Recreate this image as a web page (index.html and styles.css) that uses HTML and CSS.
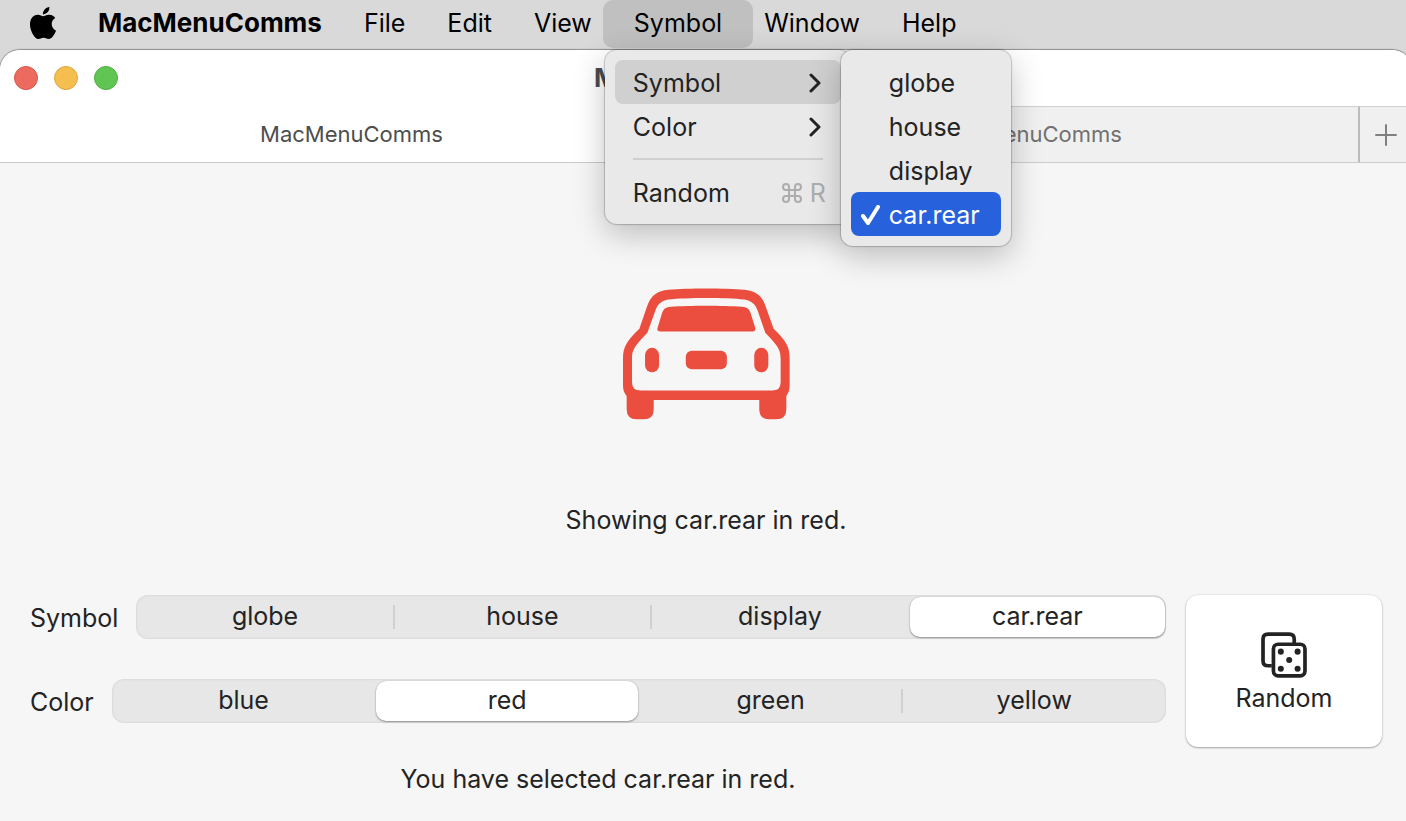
FILE: index.html
```html
<!DOCTYPE html>
<html lang="en">
<head>
<meta charset="utf-8">
<title>MacMenuComms</title>
<link rel="stylesheet" href="styles.css">
</head>
<body>
<nav class="menubar" aria-label="Menu bar">
  <button class="menubar-item apple" aria-label="Apple menu">
    <svg viewBox="0 0 24 24" aria-hidden="true"><path d="M12.152 6.896c-.948 0-2.415-1.078-3.96-1.04-2.04.027-3.91 1.183-4.961 3.014-2.117 3.675-.546 9.103 1.519 12.09 1.013 1.454 2.208 3.09 3.792 3.039 1.52-.065 2.09-.987 3.935-.987 1.831 0 2.35.987 3.96.948 1.637-.026 2.676-1.48 3.676-2.948 1.156-1.688 1.636-3.325 1.662-3.415-.039-.013-3.182-1.221-3.22-4.857-.026-3.04 2.48-4.494 2.597-4.559-1.429-2.09-3.623-2.324-4.39-2.376-2-.156-3.675 1.09-4.61 1.09zM15.53 3.83c.843-1.012 1.4-2.427 1.245-3.83-1.207.052-2.662.805-3.532 1.818-.78.896-1.454 2.338-1.273 3.714 1.338.104 2.715-.688 3.559-1.701"/></svg>
  </button>
  <button class="menubar-item app-name">MacMenuComms</button>
  <button class="menubar-item">File</button>
  <button class="menubar-item">Edit</button>
  <button class="menubar-item">View</button>
  <div class="menubar-open">
    <button class="menubar-item active" aria-expanded="true">Symbol</button>
    <div class="menu main-menu" role="menu">
      <button class="menu-item current" role="menuitem">Symbol
        <svg class="chevron" viewBox="0 0 12 20" aria-hidden="true"><path d="M2 2l8 8-8 8"/></svg>
      </button>
      <button class="menu-item" role="menuitem">Color
        <svg class="chevron" viewBox="0 0 12 20" aria-hidden="true"><path d="M2 2l8 8-8 8"/></svg>
      </button>
      <hr class="menu-separator">
      <button class="menu-item" role="menuitem">Random
        <span class="shortcut"><svg class="command" viewBox="0 0 20 20" aria-label="Command"><path d="M7 7h6v6H7zM7 7H4a3 3 0 1 1 3-3zM13 7V4a3 3 0 1 1 3 3zM13 13h3a3 3 0 1 1-3 3zM7 13v3a3 3 0 1 1-3-3z"/></svg>R</span>
      </button>
      <div class="menu sub-menu" role="menu">
        <button class="menu-item" role="menuitemradio">globe</button>
        <button class="menu-item" role="menuitemradio">house</button>
        <button class="menu-item" role="menuitemradio">display</button>
        <button class="menu-item checked" role="menuitemradio" aria-checked="true">
          <svg class="check" viewBox="0 0 20 20" aria-hidden="true"><path d="M2 11l5 7L17 2"/></svg>car.rear</button>
      </div>
    </div>
  </div>
  <button class="menubar-item">Window</button>
  <button class="menubar-item">Help</button>
</nav>

<div class="window">
  <header class="titlebar">
    <div class="lights">
      <button class="light close" aria-label="Close"></button>
      <button class="light minimize" aria-label="Minimize"></button>
      <button class="light zoom" aria-label="Zoom"></button>
    </div>
    <h1 class="title">MacMenuComms</h1>
  </header>
  <div class="tabs" role="tablist">
    <button class="tab selected" role="tab" aria-selected="true">MacMenuComms</button>
    <button class="tab" role="tab">MacMenuComms</button>
    <button class="new-tab" aria-label="New tab">
      <svg viewBox="0 0 22 22" aria-hidden="true"><path d="M11 1v20M1 11h20"/></svg>
    </button>
  </div>

  <main class="content">
    <svg class="car" viewBox="39 24 500 393" role="img" aria-label="car.rear">
      <path fill-rule="evenodd" d="M39 235C39 199 50 182 88 145L112 75C123 45 142 31 175 28C230 23 347 23 402 28C435 31 455 45 465 75L490 145C528 182 538 199 538 235V315C538 330 534 338 528 346V386Q528 416 498 416H477Q447 416 447 386V358H131V386Q131 416 101 416H80Q50 416 50 386V346C43 338 39 330 39 315ZM66 235C66 210 72 198 112 157L136 90C143 70 155 60 175 57C230 51 347 51 402 57C422 60 435 70 442 90L465 157C505 198 511 210 511 235V305Q511 330 486 330H92Q66 330 66 305Z"/>
      <path d="M142 144L156 98C161 84 168 80 182 79C240 75 337 75 395 79C409 80 416 84 421 98L435 143Q437 153 427 153H152Q140 153 142 144Z"/>
      <rect x="105" y="202" width="42" height="73" rx="21"/>
      <rect x="432" y="202" width="42" height="73" rx="21"/>
      <rect x="227" y="211" width="123" height="55" rx="18"/>
    </svg>
    <p class="status">Showing car.rear in red.</p>

    <div class="controls">
      <div class="pickers">
        <div class="picker" role="radiogroup" aria-labelledby="symbol-label">
          <span class="picker-label" id="symbol-label">Symbol</span>
          <div class="segments">
            <label class="segment"><input type="radio" name="symbol"><span>globe</span></label>
            <label class="segment"><input type="radio" name="symbol"><span>house</span></label>
            <label class="segment"><input type="radio" name="symbol"><span>display</span></label>
            <label class="segment"><input type="radio" name="symbol" checked><span>car.rear</span></label>
          </div>
        </div>
        <div class="picker" role="radiogroup" aria-labelledby="color-label">
          <span class="picker-label" id="color-label">Color</span>
          <div class="segments">
            <label class="segment"><input type="radio" name="color"><span>blue</span></label>
            <label class="segment"><input type="radio" name="color" checked><span>red</span></label>
            <label class="segment"><input type="radio" name="color"><span>green</span></label>
            <label class="segment"><input type="radio" name="color"><span>yellow</span></label>
          </div>
        </div>
        <p class="status">You have selected car.rear in red.</p>
      </div>
      <button class="random">
        <svg viewBox="273 158 137 136" aria-hidden="true">
          <path d="M305 258H294Q279 258 279 243V179Q279 164 294 164H357Q372 164 372 179V190"/>
          <rect x="310" y="194" width="94" height="94" rx="14"/>
          <g class="pips"><circle cx="332" cy="216" r="9"/><circle cx="382" cy="216" r="9"/><circle cx="357" cy="241" r="9"/><circle cx="332" cy="267" r="9"/><circle cx="382" cy="267" r="9"/></g>
        </svg>
        Random
      </button>
    </div>
  </main>
</div>
</body>
</html>
```
FILE: styles.css
```css
* {
  box-sizing: border-box;
}

html {
  height: 100%;
  overflow: hidden;
}

body {
  display: flex;
  flex-direction: column;
  min-height: 100%;
  margin: 0;
  background: #d9d9d9;
  color: #232323;
  font-family: Inter, "Liberation Sans", sans-serif;
  font-size: 25px;
  line-height: 32px;
}

button {
  padding: 0;
  border: 0;
  background: none;
  color: inherit;
  font: inherit;
}

/* Menu bar */
.menubar {
  position: relative;
  z-index: 2;
  display: flex;
  padding-left: 6px;
  color: #000;
}

.menubar-item {
  height: 48px;
  padding: 0 21px 2px;
}

.menubar-item.apple {
  padding-right: 18px;
}

.apple svg {
  display: block;
  width: 32px;
  height: 32px;
}

.app-name {
  font-size: 26px;
  font-weight: 700;
}

.menubar-open {
  position: relative;
  margin: 0 -10px;
}

.menubar-item.active {
  padding: 0 31px 2px;
  border-radius: 10px;
  background: #c0c0c0;
}

.menu {
  position: absolute;
  display: flex;
  flex-direction: column;
  padding: 10px;
  border-radius: 12px;
  background: #e9e9e9;
  color: #232323;
  box-shadow: 0 0 1px 1px rgba(0, 0, 0, 0.2), 0 10px 32px rgba(0, 0, 0, 0.24);
}

.main-menu {
  top: 50px;
  left: 2px;
  width: 246px;
}

.sub-menu {
  top: 0;
  left: 236px;
  width: 170px;
}

.menu-item {
  display: flex;
  align-items: center;
  justify-content: space-between;
  height: 44px;
  padding: 2px 20px 0 18px;
  border-radius: 8px;
  text-align: left;
}

.menu-item.current {
  background: #d0d0d0;
}

.menu-separator {
  width: 190px;
  height: 2px;
  margin: 10px 18px;
  border: 0;
  background: #cfcfcf;
}

.chevron {
  width: 12px;
  height: 20px;
}

.chevron,
.check {
  fill: none;
  stroke: currentColor;
  stroke-width: 3;
  stroke-linecap: round;
  stroke-linejoin: round;
}

.shortcut {
  display: flex;
  align-items: center;
  gap: 8px;
  margin-right: -5px;
  color: #adadad;
}

.command {
  width: 20px;
  height: 20px;
  fill: none;
  stroke: currentColor;
  stroke-width: 2;
}

.sub-menu .menu-item {
  justify-content: flex-start;
  padding: 2px 0 0 38px;
}

.sub-menu .checked {
  gap: 8px;
  padding-left: 10px;
  background: #2761db;
  color: #fff;
}

.check {
  width: 20px;
  height: 20px;
  stroke-width: 4;
}

/* Window */
.window {
  flex: 1;
  width: calc(100% + 6px);
  margin-top: 2px;
  overflow: hidden;
  border-radius: 20px 20px 0 0;
  background: #f6f6f6;
  box-shadow: 0 0 1px 1px rgba(0, 0, 0, 0.35);
}

.titlebar {
  display: grid;
  grid-template-columns: 1fr auto 1fr;
  align-items: center;
  height: 56px;
  padding: 0 14px;
  background: #fff;
}

.lights {
  display: flex;
  gap: 16px;
}

.light {
  width: 24px;
  height: 24px;
  border: 1px solid;
  border-radius: 50%;
}

.close {
  border-color: #d8554b;
  background: #ec6a5e;
}

.minimize {
  border-color: #dba63f;
  background: #f5bf4f;
}

.zoom {
  border-color: #4eae40;
  background: #61c554;
}

.title {
  margin: 0;
  color: #4b4b4b;
  font-size: 26px;
  font-weight: 700;
}

.tabs {
  display: flex;
  height: 57px;
  border-bottom: 1px solid #cbcbcb;
  background: #f0f0f0;
}

.tab {
  flex: 1;
  padding: 0 0 2px 24px;
  border-top: 1px solid #cfcfcf;
  color: #717171;
  font-size: 22px;
}

.tab.selected {
  border-top-color: #fff;
  background: #fff;
  color: #4d4d4d;
}

.new-tab {
  display: grid;
  place-items: center;
  width: 54px;
  border-top: 1px solid #cfcfcf;
  border-left: 2px solid #bcbcbc;
}

.new-tab svg {
  width: 22px;
  height: 22px;
  fill: none;
  stroke: #808080;
  stroke-width: 2;
  stroke-linecap: round;
}

.content {
  display: flex;
  flex-direction: column;
  align-items: center;
  padding: 125px 30px 0;
}

.car {
  width: 167px;
  height: 132px;
  margin-bottom: 84px;
  fill: #eb4e3f;
}

.status {
  margin: 0;
  text-align: center;
}

.controls {
  display: grid;
  grid-template-columns: 1fr 196px;
  gap: 20px;
  align-items: start;
  align-self: stretch;
  margin-top: 59px;
}

.pickers {
  display: flex;
  flex-direction: column;
  gap: 40px;
}

.picker {
  display: flex;
  align-items: center;
  gap: 18px;
}

.picker-label {
  padding-top: 2px;
}

.segments {
  display: flex;
  flex: 1;
  gap: 2px;
  height: 44px;
  padding: 2px 1px;
  border-radius: 12px;
  background: #e7e7e7;
  box-shadow: inset 0 0 2px 1px rgba(0, 0, 0, 0.06);
}

.segment {
  position: relative;
  display: flex;
  flex: 1;
  align-items: center;
  justify-content: center;
  padding-bottom: 2px;
  border-radius: 10px;
}

.segment input {
  position: absolute;
  inset: 0;
  margin: 0;
  opacity: 0;
}

.segment:has(:checked) {
  background: #fff;
  box-shadow: 0 1px 2px rgba(0, 0, 0, 0.35), 0 0 1px rgba(0, 0, 0, 0.3);
}

.segment:not(:has(:checked)):has(+ .segment > input:not(:checked))::after {
  position: absolute;
  top: 8px;
  right: -2px;
  width: 2px;
  height: 24px;
  background: #d0d0d0;
  content: "";
}

.random {
  display: flex;
  flex-direction: column;
  align-items: center;
  justify-content: center;
  gap: 4px;
  height: 152px;
  padding-top: 4px;
  border-radius: 12px;
  background: #fff;
  box-shadow: 0 1px 2px rgba(0, 0, 0, 0.3), 0 0 2px rgba(0, 0, 0, 0.15);
}

.random svg {
  width: 46px;
  height: 46px;
  fill: none;
  stroke: #232323;
  stroke-width: 11;
}

.random .pips {
  fill: #232323;
  stroke: none;
}
```
